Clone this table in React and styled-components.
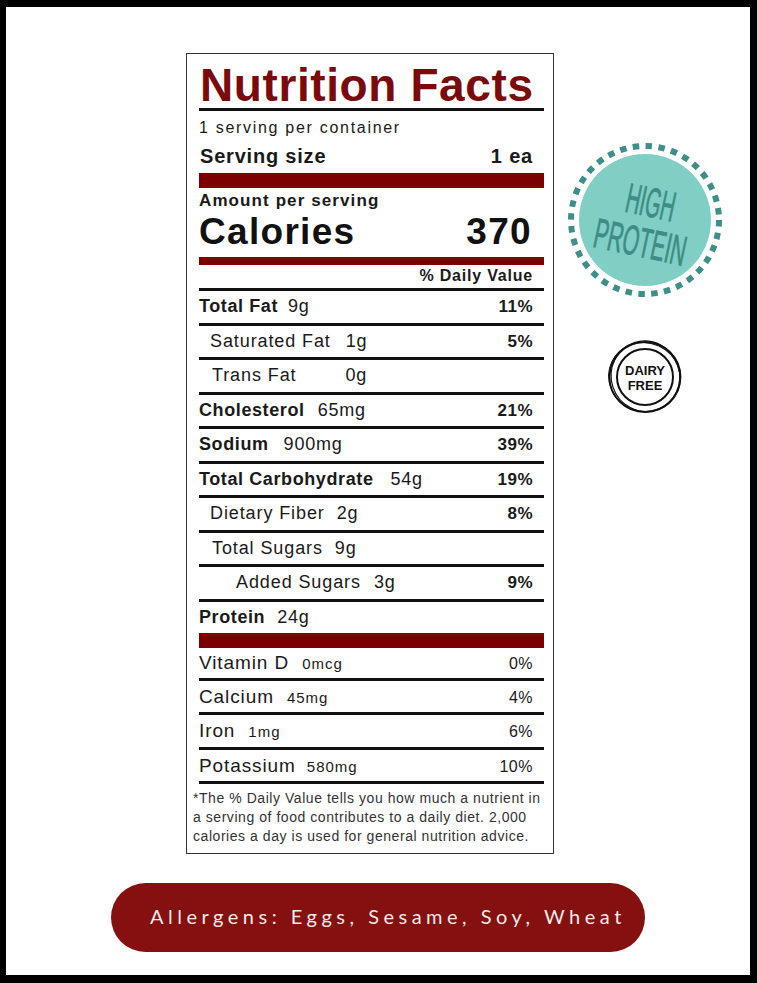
import React from "react";
import styled, { createGlobalStyle } from "styled-components";

const GlobalStyle = createGlobalStyle`
  html, body {
    margin: 0;
    padding: 0;
    background: #000;
  }
  * {
    box-sizing: border-box;
  }
`;

const RED = "#7d0000";

const Page = styled.div`
  margin: 7px 7px 8px 6px;
  height: 968px;
  background: #fff;
  padding-top: 46px;
  font-family: "Liberation Sans", Arial, sans-serif;
  color: #1a1a1a;
`;

const Top = styled.div`
  display: flex;
  align-items: flex-start;
  padding-left: 180px;
  gap: 11px;
`;

const Label = styled.div`
  width: 368px;
  border: 1px solid #333;
  padding: 8px 9px 7px 12px;
`;

const Title = styled.h1`
  margin: 0;
  padding-left: 1px;
  font-size: 46px;
  line-height: 46px;
  font-weight: 700;
  letter-spacing: 0.6px;
  color: #7b0a0d;
  border-bottom: 3px solid #111;
  white-space: nowrap;
`;

const Servings = styled.div`
  padding-top: 5px;
  font-size: 16px;
  line-height: 24px;
  letter-spacing: 1.7px;
`;

const SizeLine = styled.div`
  display: flex;
  justify-content: space-between;
  padding: 4px 11px 0 1px;
  margin-bottom: 5px;
  font-size: 20px;
  line-height: 24px;
  font-weight: 700;
  letter-spacing: 0.8px;
`;

const Bar = styled.div`
  height: ${p => p.$h}px;
  background: ${RED};
`;

const AmountLine = styled.div`
  padding-top: 3px;
  font-size: 17px;
  line-height: 20px;
  font-weight: 700;
  letter-spacing: 1.1px;
`;

const CaloriesLine = styled.div`
  display: flex;
  justify-content: space-between;
  padding: 1px 12px 0 0;
  margin-bottom: 5px;
  font-size: 37px;
  line-height: 40px;
  font-weight: 700;
  letter-spacing: 1.3px;
  color: #111;
`;

const DVHeader = styled.div`
  padding: 1px 11px 2px 0;
  text-align: right;
  font-size: 16px;
  line-height: 20px;
  font-weight: 700;
  letter-spacing: 0.8px;
  border-bottom: 3px solid #111;
`;

const Row = styled.div`
  display: flex;
  align-items: baseline;
  height: ${p => p.$h || 31.5}px;
  line-height: ${p => p.$h || 31.5}px;
  padding: 0 11px 0 ${p => p.$indent || 0}px;
  border-bottom: ${p => (p.$noRule ? "none" : "3px solid #111")};
  box-sizing: content-box;
  white-space: nowrap;
`;

const Name = styled.span`
  font-size: ${p => (p.$vit ? 19 : 18)}px;
  font-weight: ${p => (p.$bold ? 700 : 400)};
  letter-spacing: ${p => (p.$bold ? 0.6 : 0.9)}px;
`;

const Qty = styled.span`
  margin-left: ${p => p.$gap}px;
  font-size: ${p => (p.$small ? 15 : 18)}px;
  letter-spacing: ${p => (p.$small ? 1 : 0.8)}px;
`;

const Pct = styled.span`
  margin-left: auto;
  font-size: ${p => (p.$bold ? 17 : 16)}px;
  font-weight: ${p => (p.$bold ? 700 : 400)};
  letter-spacing: 0.5px;
`;

const Footnote = styled.p`
  margin: 0 0 0 -6px;
  padding-top: 5px;
  font-size: 14px;
  line-height: 19px;
  letter-spacing: 0.55px;
  color: #333;
  white-space: nowrap;
`;

const Aside = styled.div`
  display: flex;
  flex-direction: column;
  align-items: center;
  gap: 37px;
  width: 160px;
  padding-top: 87px;
`;

const Allergens = styled.div`
  display: flex;
  align-items: center;
  width: 534px;
  height: 69px;
  margin: 29px 0 0 105px;
  padding: 0 0 4px 39px;
  border-radius: 35px;
  background: #84110f;
  color: #f4e8e8;
  font-family: Lato, "Open Sans", sans-serif;
  font-size: 20px;
  letter-spacing: 4.5px;
  white-space: nowrap;
`;

const nutrients = [
  { name: "Total Fat", bold: true, qty: "9g", gap: 10, pct: "11%" },
  { name: "Saturated Fat", qty: "1g", gap: 15, pct: "5%", indent: 11 },
  { name: "Trans Fat", qty: "0g", gap: 49, indent: 13 },
  { name: "Cholesterol", bold: true, qty: "65mg", gap: 13, pct: "21%" },
  { name: "Sodium", bold: true, qty: "900mg", gap: 15, pct: "39%" },
  { name: "Total Carbohydrate", bold: true, qty: "54g", gap: 17, pct: "19%" },
  { name: "Dietary Fiber", qty: "2g", gap: 12, pct: "8%", indent: 11 },
  { name: "Total Sugars", qty: "9g", gap: 12, indent: 13 },
  { name: "Added Sugars", qty: "3g", gap: 13, pct: "9%", indent: 37 },
];

const vitamins = [
  { name: "Vitamin D", qty: "0mcg", pct: "0%", h: 29.5 },
  { name: "Calcium", qty: "45mg", pct: "4%" },
  { name: "Iron", qty: "1mg", pct: "6%" },
  { name: "Potassium", qty: "580mg", pct: "10%", gap: 11 },
];

const HighProtein = () => (
  <svg width="160" height="160" viewBox="0 0 160 160">
    <circle cx="80" cy="80" r="66" fill="#80cec4" />
    <circle
      cx="80"
      cy="80"
      r="74"
      fill="none"
      stroke="#3f8f89"
      strokeWidth="6"
      strokeDasharray="6.5 6.416"
    />
    <g
      transform="rotate(12 80 80)"
      fill="#3d8c86"
      stroke="#3d8c86"
      strokeWidth="0.7"
      fontFamily="'Liberation Sans', Arial, sans-serif"
      fontSize="42"
      textAnchor="middle"
    >
      <text transform="translate(82 76) scale(0.47 1)">HIGH</text>
      <text transform="translate(80 117) scale(0.5 1)">PROTEIN</text>
    </g>
  </svg>
);

const DairyFree = () => (
  <svg width="80" height="80" viewBox="0 0 80 80">
    <g fill="none" stroke="#111">
      <ellipse cx="40" cy="40" rx="35.5" ry="35" strokeWidth="1.8" />
      <ellipse
        cx="40.6"
        cy="39.4"
        rx="34.2"
        ry="35.4"
        strokeWidth="1.2"
        transform="rotate(-18 40 40)"
      />
      <ellipse
        cx="39.5"
        cy="40.5"
        rx="36"
        ry="34.4"
        strokeWidth="1"
        transform="rotate(25 40 40)"
      />
      <circle cx="40" cy="40" r="28" strokeWidth="2" />
    </g>
    <g
      fill="#111"
      fontFamily="'Liberation Sans', Arial, sans-serif"
      fontSize="13"
      fontWeight="700"
      textAnchor="middle"
    >
      <text x="40" y="38">DAIRY</text>
      <text x="40" y="53">FREE</text>
    </g>
  </svg>
);

const App = () => {
  return (
    <>
      <GlobalStyle />
      <Page>
        <Top>
          <Label>
            <Title>Nutrition Facts</Title>
            <Servings>1 serving per container</Servings>
            <SizeLine>
              <span>Serving size</span>
              <span>1 ea</span>
            </SizeLine>
            <Bar $h={15} />
            <AmountLine>Amount per serving</AmountLine>
            <CaloriesLine>
              <span>Calories</span>
              <span>370</span>
            </CaloriesLine>
            <Bar $h={8} />
            <DVHeader>% Daily Value</DVHeader>
            {nutrients.map(n => (
              <Row key={n.name} $indent={n.indent}>
                <Name $bold={n.bold}>{n.name}</Name>
                <Qty $gap={n.gap}>{n.qty}</Qty>
                {n.pct && <Pct $bold>{n.pct}</Pct>}
              </Row>
            ))}
            <Row $noRule>
              <Name $bold>Protein</Name>
              <Qty $gap={12}>24g</Qty>
            </Row>
            <Bar $h={15} />
            {vitamins.map(v => (
              <Row key={v.name} $h={v.h}>
                <Name $vit>{v.name}</Name>
                <Qty $small $gap={v.gap || 13}>
                  {v.qty}
                </Qty>
                <Pct>{v.pct}</Pct>
              </Row>
            ))}
            <Footnote>
              *The % Daily Value tells you how much a nutrient in
              <br />
              a serving of food contributes to a daily diet. 2,000
              <br />
              calories a day is used for general nutrition advice.
            </Footnote>
          </Label>
          <Aside>
            <HighProtein />
            <DairyFree />
          </Aside>
        </Top>
        <Allergens>Allergens: Eggs, Sesame, Soy, Wheat</Allergens>
      </Page>
    </>
  );
};

export default App;
